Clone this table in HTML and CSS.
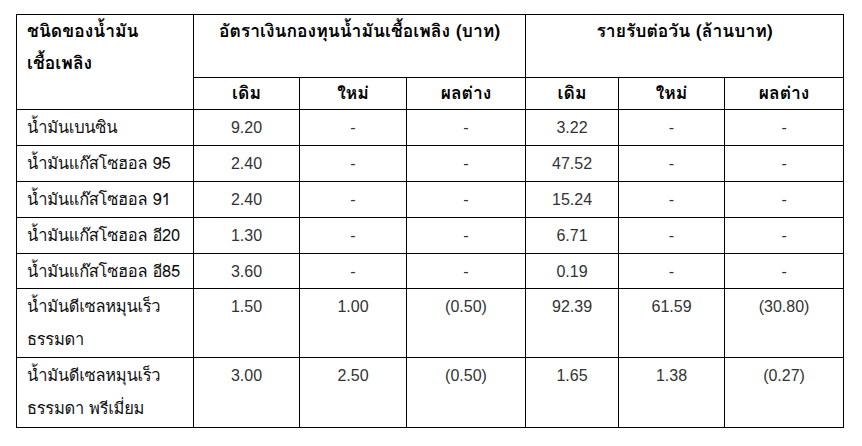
FILE: index.html
```html
<!DOCTYPE html>
<html lang="th">
<head>
<meta charset="utf-8">
<link rel="stylesheet" href="styles.css">
</head>
<body>
<table class="fund">
  <colgroup>
    <col class="c-name"><col class="c1"><col class="c2"><col class="c3"><col class="c4"><col class="c5"><col class="c6">
  </colgroup>
  <thead>
    <tr class="h1">
      <th rowspan="2" class="th-name">ชนิดของน้ำมัน<br>เชื้อเพลิง</th>
      <th colspan="3" class="th-group">อัตราเงินกองทุนน้ำมันเชื้อเพลิง (บาท)</th>
      <th colspan="3" class="th-group">รายรับต่อวัน (ล้านบาท)</th>
    </tr>
    <tr class="h2">
      <th class="th-sub">เดิม</th><th class="th-sub">ใหม่</th><th class="th-sub">ผลต่าง</th>
      <th class="th-sub">เดิม</th><th class="th-sub">ใหม่</th><th class="th-sub">ผลต่าง</th>
    </tr>
  </thead>
  <tbody>
    <tr class="r"><td class="name">น้ำมันเบนซิน</td><td>9.20</td><td>-</td><td>-</td><td>3.22</td><td>-</td><td>-</td></tr>
    <tr class="r"><td class="name">น้ำมันแก๊สโซฮอล 95</td><td>2.40</td><td>-</td><td>-</td><td>47.52</td><td>-</td><td>-</td></tr>
    <tr class="r"><td class="name">น้ำมันแก๊สโซฮอล 91</td><td>2.40</td><td>-</td><td>-</td><td>15.24</td><td>-</td><td>-</td></tr>
    <tr class="r"><td class="name">น้ำมันแก๊สโซฮอล อี20</td><td>1.30</td><td>-</td><td>-</td><td>6.71</td><td>-</td><td>-</td></tr>
    <tr class="r r5"><td class="name">น้ำมันแก๊สโซฮอล อี85</td><td>3.60</td><td>-</td><td>-</td><td>0.19</td><td>-</td><td>-</td></tr>
    <tr class="r2"><td class="name">น้ำมันดีเซลหมุนเร็ว<br>ธรรมดา</td><td>1.50</td><td>1.00</td><td>(0.50)</td><td>92.39</td><td>61.59</td><td>(30.80)</td></tr>
    <tr class="r2 r-last"><td class="name">น้ำมันดีเซลหมุนเร็ว<br>ธรรมดา พรีเมี่ยม</td><td>3.00</td><td>2.50</td><td>(0.50)</td><td>1.65</td><td>1.38</td><td>(0.27)</td></tr>
  </tbody>
</table>
</body>
</html>
```
FILE: styles.css
```css
html, body {
  margin: 0;
  padding: 0;
  background: #ffffff;
}

body {
  font-family: "Liberation Sans", "Loma", "Noto Sans Thai Looped", sans-serif;
  color: #111;
}

.fund {
  border-collapse: collapse;
  table-layout: fixed;
  width: 828px;
  margin: 14px 0 0 16px;
}

.c-name { width: 177px; }
.c1 { width: 106px; }
.c2 { width: 107px; }
.c3 { width: 119px; }
.c4 { width: 93px; }
.c5 { width: 106px; }
.c6 { width: 119px; }

.fund th,
.fund td {
  border: 1px solid #000;
  padding: 0;
  vertical-align: top;
}

.fund th {
  font-family: "Loma", "Noto Sans Thai Looped", "Liberation Sans", sans-serif;
  font-weight: bold;
  font-size: 17.5px;
  color: #000;
}

.fund .th-name {
  text-align: left;
  padding: 0 0 0 10px;
  line-height: 32px;
}

.fund .th-group {
  text-align: center;
  line-height: 32px;
  padding-top: 0;
}

.fund .th-sub {
  line-height: 30px;
  text-align: center;
}

.h1 { height: 63px; }
.h2 { height: 32px; }

.fund td {
  text-align: center;
  font-size: 16px;
  line-height: 33px;
  padding-top: 1px;
  color: #333;
}

.fund td.name {
  font-family: "Loma", "Noto Sans Thai Looped", "Liberation Sans", sans-serif;
  font-size: 16.5px;
  letter-spacing: -0.3px;
  text-align: left;
  padding-left: 10px;
  color: #111;
}

.r { height: 36px; }
.r5 { height: 35px; }
.r2 { height: 69px; }
.r-last { height: 70px; }
```
